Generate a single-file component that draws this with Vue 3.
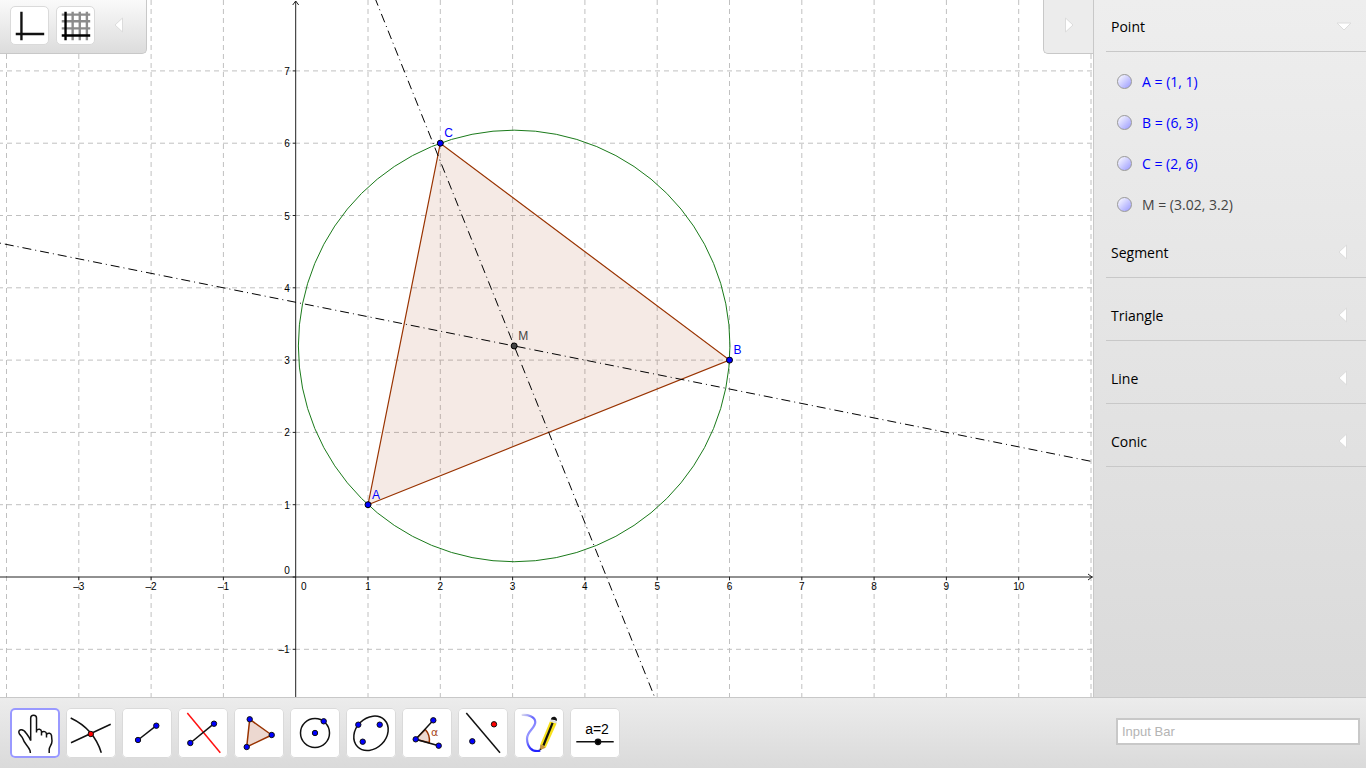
<script setup>
import { ref } from 'vue'

const unit = 72.3
const ox = 295.7
const oy = 577
const px = (x) => ox + x * unit
const py = (y) => oy - y * unit

const xs = [-4, -3, -2, -1, 1, 2, 3, 4, 5, 6, 7, 8, 9, 10, 11]
const ys = [-1, 1, 2, 3, 4, 5, 6, 7]
const xLabels = xs.filter((x) => x > -4 && x < 11)
const label = (n) => (n < 0 ? '–' + -n : String(n))

const A = [1, 1]
const B = [6, 3]
const C = [2, 6]
const M = [6.95 / 2.3, 3.8 - (0.2 * 6.95) / 2.3]
const radius = Math.hypot(M[0] - 1, M[1] - 1) * unit
const triangle = [A, B, C].map(([x, y]) => `${px(x)},${py(y)}`).join(' ')

const bisectors = [
  { x1: -5, y1: 4.8, x2: 20, y2: -0.2 },
  { x1: 1, y1: 8.25, x2: 8, y2: -9.25 },
]

const points = ref([
  { name: 'A', at: A, value: '(1, 1)', free: true, shown: true },
  { name: 'B', at: B, value: '(6, 3)', free: true, shown: true },
  { name: 'C', at: C, value: '(2, 6)', free: true, shown: true },
  { name: 'M', at: M, value: '(3.02, 3.2)', free: false, shown: true },
])
const pointsOpen = ref(true)
const sections = ['Segment', 'Triangle', 'Line', 'Conic']

const tools = ['Move', 'Intersect', 'Segment', 'Perpendicular bisector', 'Polygon', 'Circle', 'Conic', 'Angle', 'Reflect', 'Pen', 'Slider']
const active = ref('Move')
const command = ref('')
</script>

<template>
  <div class="app">
    <div class="workspace">
      <main class="graphics">
        <svg class="plot" role="img" aria-label="Circumcircle of a triangle">
          <g class="grid">
            <line v-for="x in xs" :key="'x' + x" :x1="px(x)" y1="0" :x2="px(x)" y2="100%" />
            <line v-for="y in ys" :key="'y' + y" x1="-2" :y1="py(y)" x2="100%" :y2="py(y)" />
          </g>
          <polygon class="triangle" :points="triangle" />
          <circle class="conic" :cx="px(M[0])" :cy="py(M[1])" :r="radius" />
          <g class="axis">
            <line :x1="ox" y1="1" :x2="ox" y2="100%" />
            <line x1="0" :y1="oy" x2="100%" :y2="oy" />
            <path :d="`M${ox - 3} 5L${ox} 1L${ox + 3} 5`" />
            <svg class="arrow-end" x="100%" :y="oy"><path d="M-5-3L-1 0L-5 3" /></svg>
            <line v-for="x in xLabels" :key="'tx' + x" :x1="px(x)" :y1="oy" :x2="px(x)" :y2="oy + 3" />
            <line v-for="y in ys" :key="'ty' + y" :x1="ox - 3" :y1="py(y)" :x2="ox" :y2="py(y)" />
            <line :x1="ox - 3" :y1="oy" :x2="ox" :y2="oy" />
          </g>
          <g class="ticks">
            <text v-for="x in xLabels" :key="'lx' + x" :x="px(x)" :y="oy + 13" text-anchor="middle">{{ label(x) }}</text>
            <text :x="ox + 8" :y="oy + 13" text-anchor="middle">0</text>
            <text v-for="y in ys" :key="'ly' + y" :x="ox - 6" :y="py(y) + 4" text-anchor="end">{{ label(y) }}</text>
            <text :x="ox - 6" :y="oy - 3" text-anchor="end">0</text>
          </g>
          <line v-for="(b, i) in bisectors" :key="'b' + i" class="bisector" :x1="px(b.x1)" :y1="py(b.y1)" :x2="px(b.x2)" :y2="py(b.y2)" />
          <template v-for="p in points" :key="p.name">
            <g v-if="p.shown" class="point" :class="{ fixed: !p.free }">
              <circle :cx="px(p.at[0])" :cy="py(p.at[1])" r="3" />
              <text :x="px(p.at[0]) + 4" :y="py(p.at[1]) - 6">{{ p.name }}</text>
            </g>
          </template>
        </svg>

        <div class="stylebar">
          <button type="button" class="toggle" aria-label="Show axes">
            <svg width="39" height="39" viewBox="0 0 39 39"><path d="M11 5v30M5 28.5h30" stroke="#111" stroke-width="2.5" /></svg>
          </button>
          <button type="button" class="toggle" aria-label="Show grid">
            <svg width="39" height="39" viewBox="0 0 39 39">
              <path d="M16.5 5v30M24 5v30M31.5 5v30M5 8h30M5 15h30M5 22.5h30" stroke="#8c8c8c" stroke-width="2.5" />
              <path d="M9 5v30M5 30h30" stroke="#000" stroke-width="2.5" />
            </svg>
          </button>
          <button type="button" class="fold" aria-label="Collapse style bar">
            <svg width="10" height="16" viewBox="0 0 10 16"><path d="M8.5 1v14L1 8z" /></svg>
          </button>
        </div>

        <button type="button" class="panel-tab" aria-label="Hide algebra view">
          <svg width="10" height="16" viewBox="0 0 10 16"><path d="M1.5 1v14L9 8z" /></svg>
        </button>
      </main>

      <aside class="algebra">
        <section>
          <button type="button" class="heading" @click="pointsOpen = !pointsOpen">
            <span>Point</span>
            <svg width="18" height="16" viewBox="0 0 18 16"><path d="M2 5h14L9 12z" /></svg>
          </button>
          <ul v-if="pointsOpen" class="items">
            <li v-for="p in points" :key="p.name">
              <label :class="{ fixed: !p.free }">
                <input v-model="p.shown" type="checkbox" />
                <span>{{ p.name }} = {{ p.value }}</span>
              </label>
            </li>
          </ul>
        </section>
        <div class="folded">
          <section v-for="s in sections" :key="s">
            <button type="button" class="heading">
              <span>{{ s }}</span>
              <svg width="18" height="16" viewBox="0 0 18 16"><path d="M11.5 1v14L4 8z" /></svg>
            </button>
          </section>
        </div>
      </aside>
    </div>

    <footer class="toolbar">
      <div class="tools">
        <button v-for="t in tools" :key="t" type="button" class="tool" :class="{ active: active === t }" :aria-label="t" @click="active = t">
          <svg width="50" height="50" viewBox="0 0 50 50">
            <g v-if="t === 'Move'" class="ink">
              <path d="M20.7 32.5V10C20.7 6.2 26.5 6.2 26.5 10V24.5M26.5 22.5C28 20.5 31.3 21 31.5 23.5V27.5M31.5 24.5C33.5 22.6 36.3 23.5 36.5 26V29.5M36.5 26.5C38.5 24.4 41 25.2 41.5 27.5L42 33C42 37 39.3 38.5 39.2 41.5V45" />
              <path d="M20.7 32.5C19.5 29.5 17.5 27 16 25C14.5 22.5 12.5 21.5 10.8 21.7C8.5 22.2 8.4 24.2 9.5 26C11 27.9 12.4 29 13 31C14.2 35.5 18.5 38 20 42.5L20.4 45" />
            </g>
            <g v-else-if="t === 'Intersect'" class="ink">
              <path d="M4.7 10Q28 21 35.3 44.7M5 34.7L44.7 16.3" />
              <circle class="red" cx="24.8" cy="26" r="2.7" />
            </g>
            <g v-else-if="t === 'Segment'" class="ink">
              <path d="M16 32L34.3 17.7" />
              <circle class="blue" cx="16" cy="32" r="2.7" /><circle class="blue" cx="34.3" cy="17.7" r="2.7" />
            </g>
            <g v-else-if="t === 'Perpendicular bisector'" class="ink">
              <path d="M9.3 5L42.3 44.7" stroke="#f11" />
              <path d="M12.3 35L36 15.7" />
              <circle class="blue" cx="12.3" cy="35" r="2.7" /><circle class="blue" cx="36" cy="15.7" r="2.7" />
            </g>
            <g v-else-if="t === 'Polygon'" class="ink">
              <path class="brown" d="M15.7 11.3L37.7 27L12.7 39z" />
              <circle class="blue" cx="15.7" cy="11.3" r="2.7" /><circle class="blue" cx="37.7" cy="27" r="2.7" /><circle class="blue" cx="12.7" cy="39" r="2.7" />
            </g>
            <g v-else-if="t === 'Circle'" class="ink">
              <circle cx="25" cy="25" r="14.5" />
              <circle class="blue" cx="25" cy="25" r="2.7" /><circle class="blue" cx="33.7" cy="13.3" r="2.7" />
            </g>
            <g v-else-if="t === 'Conic'" class="ink">
              <ellipse cx="25" cy="25.3" rx="19" ry="15.2" transform="rotate(-45 25 25.3)" />
              <circle class="blue" cx="12.3" cy="16.7" r="2.7" /><circle class="blue" cx="33.7" cy="16.7" r="2.7" /><circle class="blue" cx="16.7" cy="33.7" r="2.7" />
            </g>
            <g v-else-if="t === 'Angle'" class="ink">
              <path class="brown" d="M13.7 31.3L23.3 21.5Q28.3 27 27.3 34.7z" />
              <path d="M31.3 12.3L13.7 31.3L36.7 37.7" />
              <circle class="blue" cx="13.7" cy="31.3" r="2.7" /><circle class="blue" cx="31.3" cy="12.3" r="2.7" /><circle class="blue" cx="36.7" cy="37.7" r="2.7" />
              <text class="alpha" x="29" y="28">α</text>
            </g>
            <g v-else-if="t === 'Reflect'" class="ink">
              <path d="M8.3 5L42 44.7" />
              <circle class="red" cx="36" cy="16.3" r="2.7" /><circle class="blue" cx="14.3" cy="33.3" r="2.7" />
            </g>
            <g v-else-if="t === 'Pen'">
              <defs>
                <linearGradient id="stroke-fade" x1="0" y1="0" x2="0.5" y2="1">
                  <stop offset="0" stop-color="#dde" /><stop offset="0.3" stop-color="#66f" /><stop offset="0.6" stop-color="#99f" /><stop offset="1" stop-color="#22f" />
                </linearGradient>
              </defs>
              <path d="M7.7 7C14 6.5 21 8.5 21.3 14C21.5 20 12.7 23.5 13 31C13.3 38 17 44.5 26.3 42.7" fill="none" stroke="url(#stroke-fade)" stroke-width="2.2" />
              <path d="M26.3 36.5L36 13.2L42.6 15.6L31.7 39.7z" fill="#f8e11c" />
              <path d="M38.6 14.8L29.4 37.5" stroke="#111" stroke-width="2.2" />
              <path d="M26.3 36.5L25.7 42.2L31.7 39.7L29 37.5z" fill="#c7953c" />
              <path d="M25.9 40.3L25.6 42.4L27.7 41.5z" fill="#222" />
              <path d="M36 13.2L36.8 11.6L42.9 13.6L42.6 15.6z" fill="#ddd" />
              <path d="M36.8 11.4C38 7 44 8.6 42.8 13L40.5 11.9z" fill="#111" />
            </g>
            <g v-else class="ink">
              <text class="slider" x="27" y="26" text-anchor="middle">a=2</text>
              <path d="M6.3 33.8H43.7" />
              <circle cx="28" cy="33.8" r="2.6" fill="#000" />
            </g>
          </svg>
        </button>
      </div>
      <input v-model="command" class="command" type="text" placeholder="Input Bar" aria-label="Input Bar" />
    </footer>
  </div>
</template>

<style>
body {
  margin: 0;
}
</style>

<style scoped>
.app {
  display: flex;
  flex-direction: column;
  height: 100vh;
  font-family: "Open Sans", "Noto Sans", sans-serif;
  overflow: hidden;
}
button {
  margin: 0;
  padding: 0;
  border: 0;
  background: none;
  font: inherit;
  color: inherit;
  cursor: pointer;
}
button svg {
  display: block;
  fill: none;
}
.workspace {
  display: flex;
  flex: 1;
  min-height: 0;
}
.graphics {
  position: relative;
  flex: 1;
  min-width: 0;
  background: #fff;
}
.plot {
  display: block;
  width: 100%;
  height: 100%;
}
.grid line {
  stroke: #c0c0c0;
  stroke-dasharray: 5 4;
}
.axis line,
.axis path {
  stroke: #222;
  fill: none;
}
.arrow-end {
  overflow: visible;
}
.ticks text {
  font: 10px "Liberation Sans", sans-serif;
  fill: #000;
}
.triangle {
  fill: #993300;
  fill-opacity: 0.1;
  stroke: #993300;
  stroke-width: 1.2;
}
.conic {
  fill: none;
  stroke: #1a7a1a;
}
.bisector {
  stroke: #000;
  stroke-dasharray: 9 4 1 4;
}
.point circle {
  fill: #0000ff;
  stroke: #000;
}
.point text {
  font: 12px "Liberation Sans", sans-serif;
  fill: #0000ff;
}
.point.fixed circle {
  fill: #444;
}
.point.fixed text {
  fill: #444;
}
.stylebar {
  position: absolute;
  top: 0;
  left: 0;
  display: flex;
  align-items: flex-start;
  gap: 7px;
  padding: 6px 22px 8px 10px;
  border: solid #c8c8c8;
  border-width: 0 1px 1px 0;
  border-radius: 0 0 5px 0;
  background: linear-gradient(#fafafa, #dcdcdc);
}
.toggle {
  height: 39px;
  width: 39px;
  border: 1px solid #dadada;
  border-radius: 5px;
  background: #fff;
}
.toggle svg {
  width: 37px;
  height: 37px;
}
.fold {
  margin: 11px 0 0 12px;
}
.fold path,
.panel-tab path,
.heading path {
  fill: #fff;
  stroke: #dcdcdc;
}
.panel-tab {
  position: absolute;
  top: 0;
  right: 0;
  width: 50px;
  height: 54px;
  padding: 0 0 4px 20px;
  border: solid #c8c8c8;
  border-width: 0 0 1px 1px;
  border-radius: 0 0 0 5px;
  background: #ececec;
}
.algebra {
  box-sizing: border-box;
  width: 273px;
  padding-left: 12px;
  border-left: 1px solid #c8c8c8;
  background: linear-gradient(#eeeeee, #dadada);
  font-size: 14px;
  color: #000;
}
.heading {
  display: flex;
  align-items: center;
  justify-content: space-between;
  box-sizing: border-box;
  width: 100%;
  height: 52px;
  padding: 1px 13px 0 5px;
  border-bottom: 1px solid #c8c8c8;
}
.folded {
  display: flex;
  flex-direction: column;
  gap: 11px;
}
.items {
  margin: 0;
  padding: 9px 0 1px 11px;
  list-style: none;
}
.items label {
  display: flex;
  align-items: center;
  gap: 10px;
  height: 41px;
  color: #0000ff;
}
.items label.fixed {
  color: #444;
}
.items input {
  appearance: none;
  width: 15px;
  height: 15px;
  margin: 0;
  border: 1px solid #999;
  border-radius: 50%;
  background: linear-gradient(135deg, #fff, #9999ff);
}
.toolbar {
  display: flex;
  align-items: center;
  justify-content: space-between;
  box-sizing: border-box;
  height: 71px;
  padding: 0 6px 0 10px;
  border-top: 1px solid #c8c8c8;
  background: linear-gradient(#ececec, #dadada);
}
.tools {
  display: flex;
  gap: 6px;
}
.tool {
  border-radius: 5px;
  background: #fff;
  box-shadow: inset 0 0 0 1px #dadada;
}
.tool.active {
  box-shadow: inset 0 0 0 2px #9999ff;
}
.ink {
  stroke: #111;
  stroke-width: 1.5;
}
.ink .blue {
  fill: #0000ff;
  stroke-width: 1;
}
.ink .red {
  fill: #ff0000;
  stroke-width: 1;
}
.ink .brown {
  fill: #ecd8d0;
  stroke: #993300;
}
.ink text {
  stroke: none;
}
.alpha {
  font: 11px "DejaVu Sans", sans-serif;
  fill: #a84a1c;
}
.slider {
  font: 14px "Liberation Sans", sans-serif;
  fill: #000;
}
.command {
  box-sizing: border-box;
  width: 244px;
  height: 27px;
  margin-bottom: 4px;
  padding: 0 4px;
  border: 2px solid #c8c8c8;
  border-radius: 0;
  background: #fff;
  font: 13px "Liberation Sans", sans-serif;
  color: #222;
}
.command::placeholder {
  color: #b4b4b4;
}
</style>
